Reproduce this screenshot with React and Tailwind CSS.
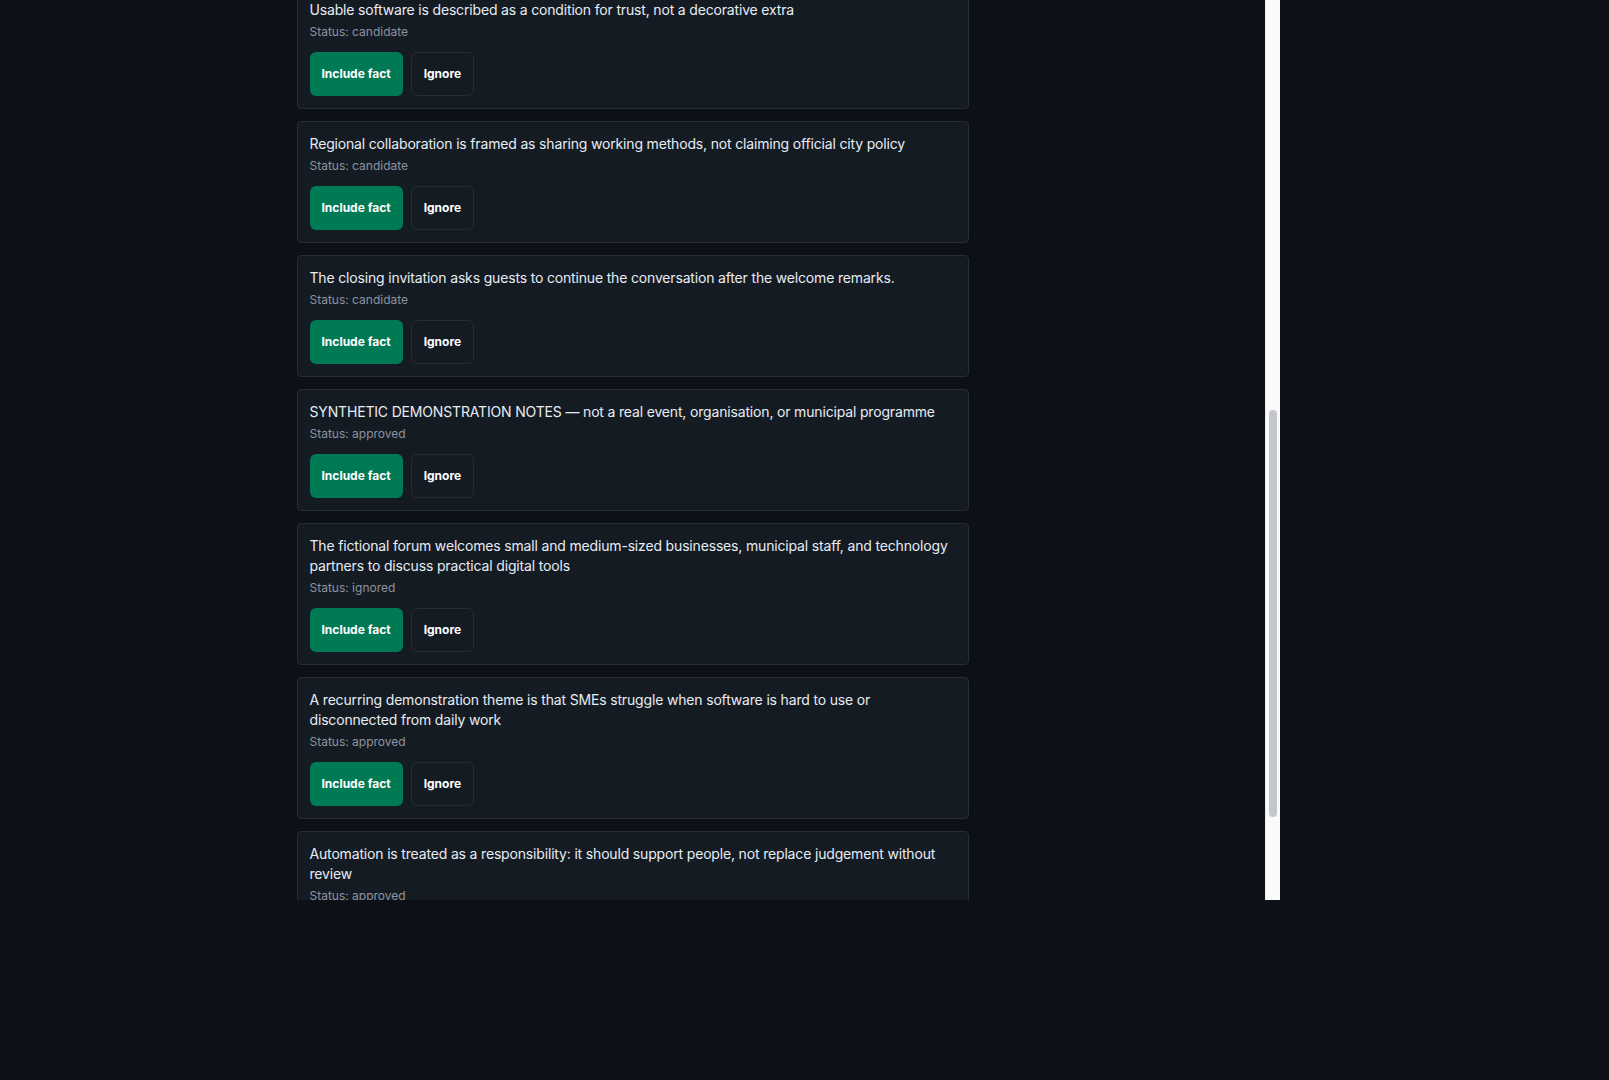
import React, { useEffect, useRef, useState } from 'react';

const earlierFacts = [
    { text: 'The welcome remarks open the fictional SME digital forum on behalf of the organising team', status: 'approved' },
    { text: 'Speakers are introduced as practitioners sharing lessons, not as official representatives', status: 'candidate' },
    { text: 'The programme focuses on everyday tools that small teams can adopt without large budgets', status: 'approved' },
    { text: 'Data protection is mentioned as a shared concern for businesses and municipal staff', status: 'candidate' },
    { text: 'Participants are encouraged to ask questions during the breakout sessions', status: 'ignored' },
    { text: 'Local examples are presented as illustrations rather than endorsed case studies', status: 'candidate' },
];

const facts = [
    { text: 'Usable software is described as a condition for trust, not a decorative extra', status: 'candidate', anchor: true },
    { text: 'Regional collaboration is framed as sharing working methods, not claiming official city policy', status: 'candidate' },
    { text: 'The closing invitation asks guests to continue the conversation after the welcome remarks.', status: 'candidate' },
    { text: 'SYNTHETIC DEMONSTRATION NOTES — not a real event, organisation, or municipal programme', status: 'approved' },
    { text: 'The fictional forum welcomes small and medium-sized businesses, municipal staff, and technology partners to discuss practical digital tools', status: 'ignored' },
    { text: 'A recurring demonstration theme is that SMEs struggle when software is hard to use or disconnected from daily work', status: 'approved' },
    { text: 'Automation is treated as a responsibility: it should support people, not replace judgement without review', status: 'approved' },
];

function FactCard({ fact, cardRef }) {
    return (
        <div ref={cardRef} className="rounded-[4px] border border-[#272d37] bg-[#151b23] p-3">
            <p className="text-sm leading-5 tracking-[-0.012em] text-[#e6edf3]">{fact.text}</p>
            <p className="mt-1 text-xs leading-4 text-[#8d949e]">Status: {fact.status}</p>
            <div className="mt-3 flex gap-2">
                <button className="h-11 rounded-md bg-[#007a55] px-3 text-xs font-bold text-white">Include fact</button>
                <button className="h-11 rounded-md border border-[#272d37] bg-transparent px-3 text-xs font-bold text-white">Ignore</button>
            </div>
        </div>
    );
}

export default function App() {
    const scrollRef = useRef(null);
    const anchorRef = useRef(null);
    const [thumb, setThumb] = useState({ top: 410, height: 407 });

    const syncThumb = () => {
        const el = scrollRef.current;
        if (!el) return;
        const track = el.clientHeight;
        setThumb({
            top: (el.scrollTop / el.scrollHeight) * track,
            height: (el.clientHeight / el.scrollHeight) * track,
        });
    };

    useEffect(() => {
        // start the list just below the earlier facts, first visible card half under the top edge
        if (scrollRef.current && anchorRef.current) {
            scrollRef.current.scrollTop = anchorRef.current.offsetTop + 13;
        }
        syncThumb();
    }, []);

    return (
        <div className="min-h-screen bg-[#0d1117] font-['Inter','Noto_Sans',sans-serif]">
            <div className="flex h-[900px] w-[1280px]">
                <div
                    ref={scrollRef}
                    onScroll={syncThumb}
                    className="relative h-full w-[1265px] overflow-y-auto [scrollbar-width:none] [&::-webkit-scrollbar]:hidden"
                >
                    <div className="mx-auto max-w-2xl pt-6 pb-[43px]">
                        <div className="mb-[17px]">
                            <h1 className="text-lg font-semibold leading-7 text-[#e6edf3]">Fact review</h1>
                            <p className="text-sm leading-5 text-[#8d949e]">Choose which extracted facts go into the draft.</p>
                        </div>
                        <div className="flex flex-col gap-3">
                            {earlierFacts.map((f, i) => (
                                <FactCard key={'e' + i} fact={f} />
                            ))}
                            {facts.map((f, i) => (
                                <FactCard key={i} fact={f} cardRef={f.anchor ? anchorRef : undefined} />
                            ))}
                        </div>
                        <div className="mt-6 flex justify-end">
                            <button className="h-11 rounded-md bg-[#007a55] px-4 text-xs font-bold text-white">Continue to draft</button>
                        </div>
                    </div>
                </div>
                {/* scrollbar track */}
                <div className="relative h-full w-[15px] border-l border-[#ececec] bg-[#fafafa]">
                    <div
                        className="absolute left-[3px] w-[8px] rounded-full bg-[#c4c7cb]"
                        style={{ top: thumb.top, height: thumb.height }}
                    />
                </div>
            </div>
        </div>
    );
}
